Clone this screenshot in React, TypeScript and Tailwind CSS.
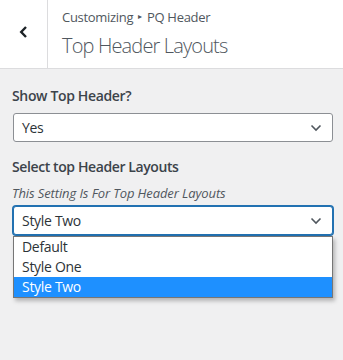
import React from "react";

const Chevron = () => (
  <svg width="12" height="8" viewBox="0 0 12 8" fill="none">
    <path d="M1.5 1.5L6 6L10.5 1.5" stroke="#50575e" strokeWidth="1.6" />
  </svg>
);

export default function App() {
  return (
    <div
      className="w-[343px] h-[360px] bg-[#f0f0f1] overflow-hidden"
      style={{ fontFamily: '"Open Sans", "Noto Sans", sans-serif' }}
    >
      <div className="h-[69px] bg-white border-b border-[#dcdcde] flex">
        <div className="w-[48px] border-r border-[#dcdcde] flex items-center justify-center pb-[4px]">
          <svg width="9" height="12" viewBox="0 0 9 12">
            <path d="M7 1L2.2 6L7 11" stroke="#1d2327" strokeWidth="2.4" fill="none" />
          </svg>
        </div>
        <div className="pl-[14px] pt-[8px] flex flex-col">
          <div className="text-[13px] leading-[18px] text-[#50575e] tracking-[-0.3px] flex items-center">
            <span>Customizing</span>
            <span className="text-[8px] mx-[5px] relative top-[-1px]">▸</span>
            <span>PQ Header</span>
          </div>
          <div className="text-[20px] leading-[28px] mt-[6px] font-light text-[#50575e] tracking-[-0.85px]">
            Top Header Layouts
          </div>
        </div>
      </div>
      <div className="px-[12px] pt-[17px]">
        <div className="text-[14px] leading-[20px] font-semibold text-[#3c434a] tracking-[-0.35px]">
          Show Top Header?
        </div>
        <div className="mt-[7px] ml-[1px] w-[320px] h-[29px] bg-white border border-[#8c8f94] rounded-[3px] flex items-center justify-between pl-[8px] pr-[10px]">
          <span className="text-[14px] text-[#2c3338] tracking-[-0.3px]">Yes</span>
          <Chevron />
        </div>
        <div className="mt-[15px] text-[14px] leading-[20px] font-semibold text-[#3c434a] tracking-[-0.4px]">
          Select top Header Layouts
        </div>
        <div className="mt-[7px] text-[13px] leading-[18px] italic text-[#50575e] tracking-[-0.1px]">
          This Setting Is For Top Header Layouts
        </div>
        <div className="mt-[4px] ml-[1px] w-[320px] h-[29px] bg-white border border-[#2271b1] shadow-[0_0_0_1px_#2271b1] rounded-[3px] flex items-center justify-between pl-[8px] pr-[10px]">
          <span className="text-[14px] text-[#2c3338] tracking-[-0.3px]">Style Two</span>
          <Chevron />
        </div>
        <div className="mt-[1px] ml-[1px] w-[320px] bg-white border border-[#767676] shadow-[2px_3px_4px_rgba(0,0,0,0.25)] flex flex-col text-[14px] tracking-[-0.3px]">
          <div className="h-[20px] leading-[20px] pl-[8px] text-[#2c3338]">Default</div>
          <div className="h-[20px] leading-[20px] pl-[8px] text-[#2c3338]">Style One</div>
          <div className="h-[20px] leading-[20px] pl-[8px] bg-[#1e90ff] text-white">Style Two</div>
        </div>
      </div>
    </div>
  );
}
